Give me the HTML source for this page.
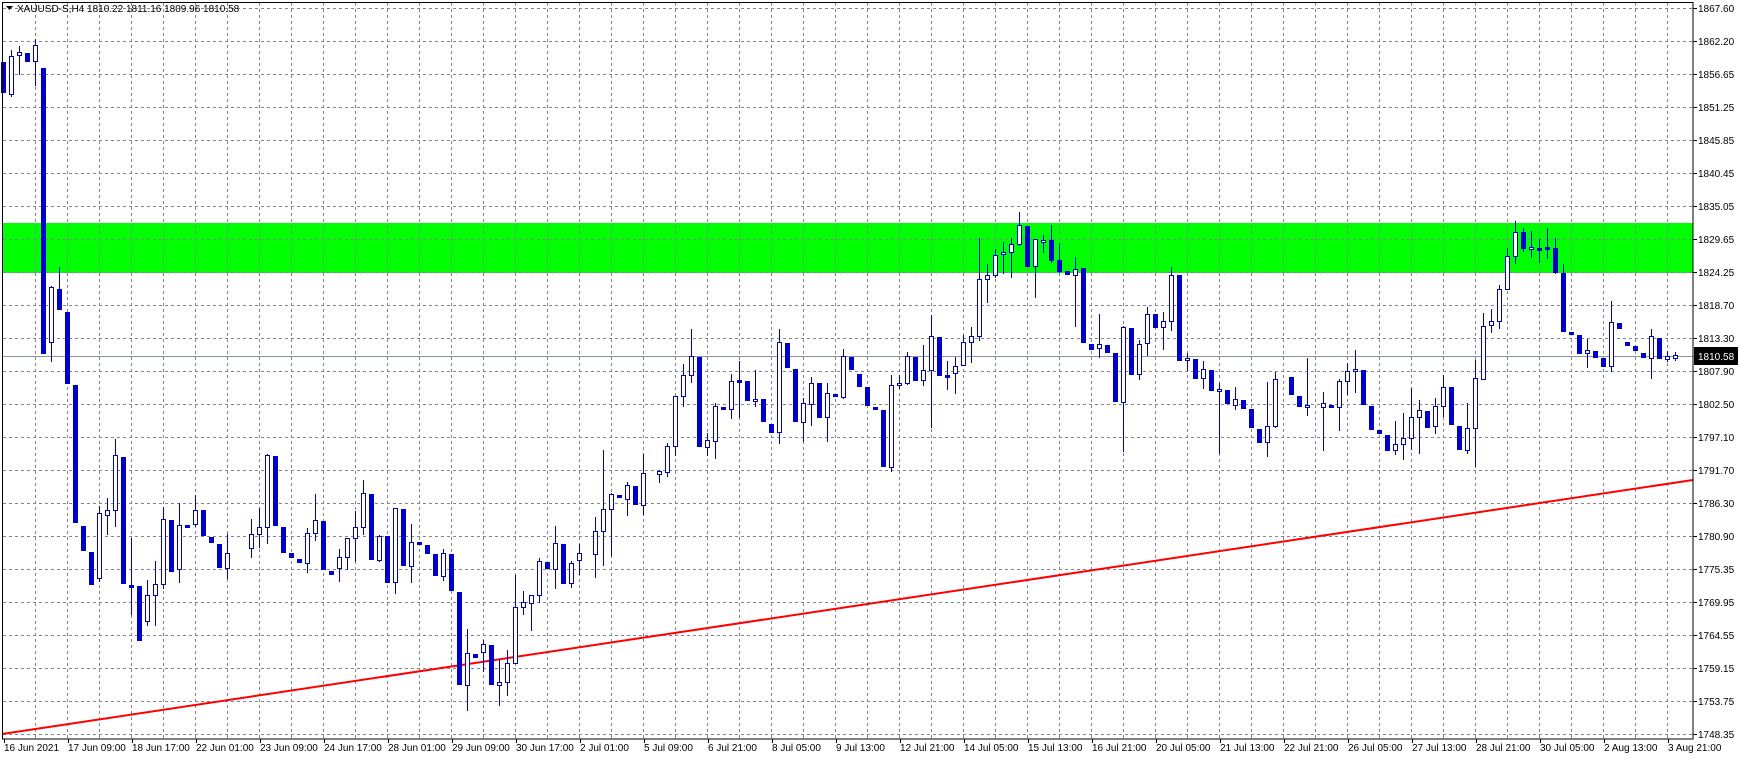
<!DOCTYPE html>
<html><head><meta charset="utf-8"><style>
html,body{margin:0;padding:0;background:#fff;width:1740px;height:760px;overflow:hidden}
svg{display:block}
text{font-family:"Liberation Sans",sans-serif;font-size:10px;fill:#000}
</style></head><body>
<svg id="s" width="1740" height="760" viewBox="0 0 1740 760" xmlns="http://www.w3.org/2000/svg">
<rect x="0" y="0" width="1740" height="760" fill="#fff"/>
<rect x="2" y="223" width="1691" height="50" fill="#00ff00"/>
<g id="grid" stroke="#7d8796" stroke-width="1" stroke-dasharray="3,3"></g>
<line x1="2" y1="356.5" x2="1693" y2="356.5" stroke="#8a97a8" stroke-width="1"/>
<line x1="2" y1="734" x2="1693" y2="480" stroke="#ff0000" stroke-width="2"/>
<g id="c"></g>
<rect x="2.5" y="2.5" width="1690.5" height="736.5" fill="none" stroke="#000" stroke-width="1"/>
<g id="ticks" stroke="#000" stroke-width="1"></g>
<polygon points="6,6 13,6 9.5,10" fill="#000"/>
<text x="17" y="12">XAUUSD-S,H4  1810.22 1811.16 1809.96 1810.58</text>
<g id="pl">
<text x="1698" y="12">1867.60</text>
<text x="1698" y="45">1862.20</text>
<text x="1698" y="78">1856.65</text>
<text x="1698" y="111">1851.25</text>
<text x="1698" y="144">1845.85</text>
<text x="1698" y="177">1840.45</text>
<text x="1698" y="210">1835.05</text>
<text x="1698" y="243">1829.65</text>
<text x="1698" y="276">1824.25</text>
<text x="1698" y="309">1818.70</text>
<text x="1698" y="342">1813.30</text>
<text x="1698" y="375">1807.90</text>
<text x="1698" y="408">1802.50</text>
<text x="1698" y="441">1797.10</text>
<text x="1698" y="474">1791.70</text>
<text x="1698" y="507">1786.30</text>
<text x="1698" y="540">1780.90</text>
<text x="1698" y="573">1775.35</text>
<text x="1698" y="606">1769.95</text>
<text x="1698" y="639">1764.55</text>
<text x="1698" y="672">1759.15</text>
<text x="1698" y="705">1753.75</text>
<text x="1698" y="738">1748.35</text>
</g>
<rect x="1694" y="347" width="44" height="18" fill="#000"/>
<text x="1698" y="360" style="fill:#fff">1810.58</text>
<g id="tl">
<text x="4" y="751">16 Jun 2021</text>
<text x="68" y="751">17 Jun 09:00</text>
<text x="132" y="751">18 Jun 17:00</text>
<text x="196" y="751">22 Jun 01:00</text>
<text x="260" y="751">23 Jun 09:00</text>
<text x="324" y="751">24 Jun 17:00</text>
<text x="388" y="751">28 Jun 01:00</text>
<text x="452" y="751">29 Jun 09:00</text>
<text x="516" y="751">30 Jun 17:00</text>
<text x="580" y="751">2 Jul 01:00</text>
<text x="644" y="751">5 Jul 09:00</text>
<text x="708" y="751">6 Jul 21:00</text>
<text x="772" y="751">8 Jul 05:00</text>
<text x="836" y="751">9 Jul 13:00</text>
<text x="900" y="751">12 Jul 21:00</text>
<text x="964" y="751">14 Jul 05:00</text>
<text x="1028" y="751">15 Jul 13:00</text>
<text x="1092" y="751">16 Jul 21:00</text>
<text x="1156" y="751">20 Jul 05:00</text>
<text x="1220" y="751">21 Jul 13:00</text>
<text x="1284" y="751">22 Jul 21:00</text>
<text x="1348" y="751">26 Jul 05:00</text>
<text x="1412" y="751">27 Jul 13:00</text>
<text x="1476" y="751">28 Jul 21:00</text>
<text x="1540" y="751">30 Jul 05:00</text>
<text x="1604" y="751">2 Aug 13:00</text>
<text x="1668" y="751">3 Aug 21:00</text>
</g>
</svg>
<script>
(function(){
var NS="http://www.w3.org/2000/svg";
function el(t,a,p){var e=document.createElementNS(NS,t);for(var k in a)e.setAttribute(k,a[k]);p.appendChild(e);return e;}
var g=document.getElementById('grid');
for(var k=0;k<52;k++){var x=35.5+32*k;el('line',{x1:x,y1:3,x2:x,y2:738},g);}
for(var k=0;k<23;k++){var y=Math.round(8.25+33*k)+0.5;if(y>3&&y<738)el('line',{x1:3,y1:y,x2:1692,y2:y},g);}
var tk=document.getElementById('ticks');
for(var k=0;k<23;k++){var y=Math.round(8.25+33*k)+0.5;el('line',{x1:1693,y1:y,x2:1697,y2:y},tk);}
for(var k=0;k<27;k++){var x=4.5+64*k;el('line',{x1:x,y1:739,x2:x,y2:743},tk);}
var D=[
[0,'s',127,190],[1,'b',115,193,103,198],[2,'b',107,114,95,152],[3,'s',110,125],[4,'b',92,125,80,176],
[5,'s',141,727],[6,'b',592,705,590,743],[7,'s',596,636,550,636],[8,'s',642,789],[9,'s',793,1076],
[10,'s',1083,1134],[11,'s',1137,1204],[12,'b',1058,1192,1043,1197],[13,'b',1050,1062,1027,1101],[14,'b',938,1050,905,1084],
[15,'s',942,1202],[16,'s',1205,1209,1109,1265],[17,'s',1207,1319],[18,'b',1226,1280,1195,1287],[19,'b',1203,1226,1157,1287],
[20,'b',1070,1203,1045,1212],[21,'s',1072,1177],[22,'b',1082,1172,1037,1200],[23,'s',1082,1085],[24,'b',1051,1080,1020,1083],
[25,'s',1051,1103],[26,'s',1107,1117],[27,'s',1120,1168],[28,'b',1139,1170,1100,1190],
[31,'b',1100,1129,1070,1147],[32,'b',1085,1100,1047,1127],[33,'b',938,1085,935,1118],[34,'s',940,1082],
[35,'s',1085,1137],[36,'s',1140,1147],[37,'s',1152,1158],[38,'b',1099,1160,1087,1178],[39,'b',1072,1099,1018,1112],
[40,'s',1073,1172],[41,'s',1177,1183],[42,'b',1148,1170,1132,1197],[43,'b',1109,1148,1109,1172],[44,'b',1085,1108,1053,1155],
[45,'b',1016,1085,990,1100],[46,'s',1018,1152],[47,'b',1104,1154,1102,1156],[48,'s',1105,1200],[49,'b',1047,1200,1047,1222],
[50,'s',1049,1165],[51,'b',1117,1166,1080,1200],[52,'s',1117,1119],[53,'s',1122,1140],[54,'s',1141,1185],
[55,'b',1140,1186,1131,1195],[56,'s',1141,1216],[57,'s',1220,1410],[58,'b',1346,1412,1297,1464],[59,'s',1348,1354],
[60,'b',1328,1344,1318,1382],[61,'s',1329,1410],[62,'b',1406,1412,1357,1453],[63,'b',1366,1405,1340,1432],[64,'b',1250,1366,1185,1366],
[65,'b',1241,1250,1218,1266],[66,'b',1227,1242,1227,1298],[67,'b',1155,1226,1150,1240],[68,'s',1158,1171],[69,'b',1119,1173,1083,1212],
[70,'s',1120,1202],[71,'b',1160,1202,1155,1210],[72,'b',1140,1153,1120,1183],
[74,'b',1095,1141,1065,1188],[75,'b',1048,1095,928,1165],[76,'b',1018,1048,1015,1143],[77,'s',1020,1025],[78,'b',1000,1028,993,1062],
[79,'s',1001,1039],[80,'b',974,1041,935,1060],[82,'b',970,976,968,993],[83,'b',920,973,912,981],[84,'b',815,920,815,937],
[85,'b',773,815,750,836],[86,'b',733,773,678,788],[87,'s',735,920],[88,'b',907,922,893,938],[89,'b',836,908,830,943],
[90,'s',838,841],[91,'b',785,842,770,862],[92,'s',782,786,743,860],[93,'s',785,825],[94,'b',822,826,762,836],
[95,'s',822,868],[96,'s',873,890],[97,'b',705,890,678,912],[98,'s',706,756],[99,'s',760,868],
[100,'b',830,870,820,908],[101,'b',789,832,776,876],[102,'s',790,860],[103,'b',810,860,790,908],[104,'s',812,816],
[105,'b',733,818,720,820],[106,'s',735,760],[107,'s',770,796],[108,'s',798,834],[109,'s',838,841],
[110,'s',844,960],[111,'b',793,962,772,970],[112,'b',789,793,772,800],[113,'b',733,790,726,792],[114,'s',735,783],
[115,'b',762,783,711,793],[116,'b',692,762,650,880],[117,'s',695,773],[118,'s',772,775,743,802],[119,'b',755,768,735,810],
[120,'b',705,753,690,745],[121,'b',692,705,673,745],[122,'b',575,692,490,700],[123,'b',566,575,543,622],[124,'b',525,566,513,570],
[125,'b',519,522,498,562],[126,'b',502,519,491,570],[127,'b',463,502,437,505],[128,'s',465,548],[129,'b',493,548,492,612],
[130,'b',494,498,485,520],[131,'s',494,535,463,540],[132,'s',535,558,500,560],[133,'s',559,564],[134,'b',554,567,530,672],
[135,'s',552,705],[136,'s',709,719],[137,'b',708,717,648,736],[138,'s',711,726],[139,'s',728,826],
[140,'b',673,828,672,930],[141,'s',676,770],[142,'b',708,771,700,780],[143,'b',647,706,633,732],[144,'s',648,673],
[145,'b',662,674,642,720],[146,'b',566,662,550,680],[147,'s',566,741],[148,'b',737,742,728,762],[149,'s',740,779],
[150,'b',760,779,743,800],[151,'s',762,804],[152,'b',801,805,790,933],[153,'s',804,830],[154,'b',822,835,798,843],
[155,'s',824,840],[156,'s',842,880],[157,'s',884,910],[158,'b',878,910,788,940],[159,'b',781,878,766,880],
[161,'s',776,812],[162,'s',815,836],[163,'b',834,838,737,855],[165,'b',831,838,808,928],
[166,'s',834,838],[167,'b',785,838,780,886],[168,'b',764,785,748,812],[169,'b',760,763,722,808],[170,'s',762,832],
[171,'s',836,884],[172,'s',887,893],[173,'s',896,927],[174,'b',915,928,868,935],[175,'b',903,914,850,945],
[176,'b',860,903,800,926],[177,'b',845,860,825,933],[178,'s',847,880],[179,'b',836,878,820,892],[180,'b',797,836,773,858],
[181,'s',798,874],[182,'s',878,925],[183,'b',882,927,830,933],[184,'b',778,882,742,960],[185,'b',672,780,645,780],
[186,'b',661,670,637,685],[187,'b',595,662,588,675],[188,'b',527,595,512,595],[189,'b',478,527,455,542],[190,'s',478,510,470,518],
[191,'b',509,512,475,530],[192,'s',510,513,493,540],[193,'s',509,512,470,532],[194,'s',511,560,490,562],[195,'s',562,683,545,683],
[196,'s',685,688],[197,'s',690,727],[198,'b',722,728,698,757],[199,'s',724,736],[200,'s',738,755],
[201,'b',664,755,620,765],[202,'s',665,676],[203,'s',704,710],[204,'s',712,722],[205,'s',727,736],
[206,'b',693,738,678,778],[207,'s',697,738],[208,'b',733,740,723,743],[209,'b',732,738,725,742]
];
var c=document.getElementById('c'),S=0.4853,col='#0000cd';
D.forEach(function(d){
 var cx=3+8*d[0],t=Math.round(d[2]*S),b=Math.round(d[3]*S);
 var h=d.length>4?Math.round(d[4]*S):t,l=d.length>4?Math.round(d[5]*S):b;
 if(b-t<2)b=t+2;
 if(h<t||l>b)el('line',{x1:cx+0.5,y1:h,x2:cx+0.5,y2:l+1,stroke:col,'stroke-width':1},c);
 if(d[1]=='s'){el('rect',{x:cx-2,y:t,width:5,height:b-t+1,fill:col},c);}
 else{el('rect',{x:cx-1.5,y:t+0.5,width:4,height:b-t,fill:'#fff',stroke:col,'stroke-width':1},c);}
});
})();
</script>
</body></html>
